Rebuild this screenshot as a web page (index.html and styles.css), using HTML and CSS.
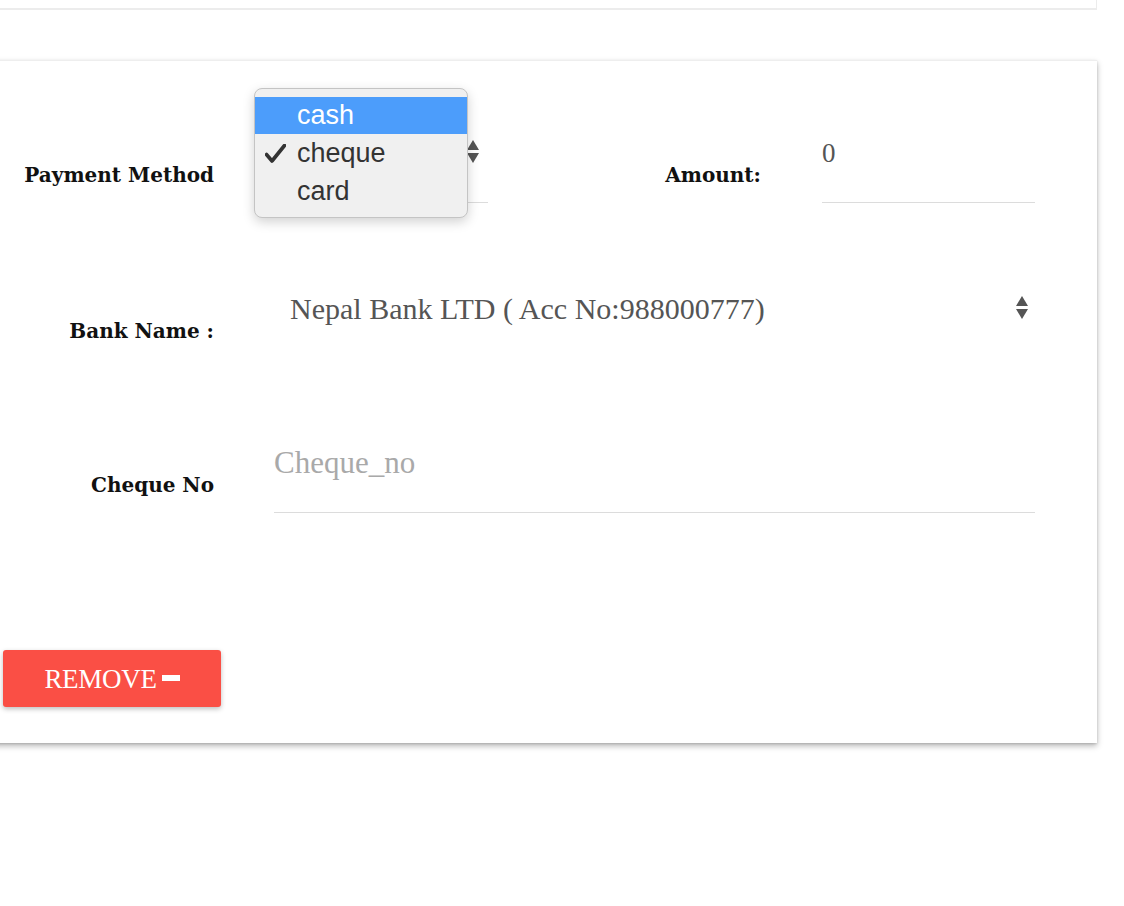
FILE: index.html
```html
<!DOCTYPE html>
<html>
<head>
<meta charset="utf-8">
<link rel="stylesheet" href="styles.css">
</head>
<body>
<div class="top-card"></div>
<div class="card">
  <div class="row row-1">
    <div class="label">Payment Method</div>
    <div class="select pay-select">
      <span class="arrows"><i class="up"></i><i class="down"></i></span>
    </div>
    <div class="label amount-label">Amount:</div>
    <div class="input amount-input">0</div>
  </div>
  <div class="row row-2">
    <div class="label">Bank Name :</div>
    <div class="select bank-select">
      <span class="select-text">Nepal Bank LTD ( Acc No:988000777)</span>
      <span class="arrows"><i class="up"></i><i class="down"></i></span>
    </div>
  </div>
  <div class="row row-3">
    <div class="label">Cheque No</div>
    <div class="input cheque-input"><span class="placeholder">Cheque_no</span></div>
  </div>
  <div class="btn-row">
    <button class="remove-btn">REMOVE<span class="minus"></span></button>
  </div>
  <div class="popup">
    <div class="opt selected">cash</div>
    <div class="opt"><svg class="check" width="21" height="19" viewBox="0 0 21 19"><path d="M1.5 10.5 L7 17 L19.5 1.5" fill="none" stroke="#333" stroke-width="3.6" stroke-linecap="round" stroke-linejoin="round"/></svg>cheque</div>
    <div class="opt">card</div>
  </div>
</div>
</body>
</html>
```

FILE: styles.css
```css
html, body {
  margin: 0;
  padding: 0;
  background: #fff;
  overflow: hidden;
}
body {
  width: 1124px;
  height: 906px;
  font-family: "DejaVu Serif", "Liberation Serif", serif;
}
.top-card {
  width: 1096px;
  height: 8px;
  background: #fff;
  border-bottom: 2px solid #ececec;
  border-right: 1px solid #ececec;
}
.card {
  position: relative;
  margin-top: 50px;
  margin-left: -10px;
  width: 1107px;
  height: 683px;
  box-sizing: border-box;
  padding: 59px 0 0 10px;
  background: #fff;
  border-top: 1px solid #eee;
  box-shadow: 0 3px 6px rgba(0, 0, 0, 0.28), 0 1px 2px rgba(0, 0, 0, 0.12);
}
.row {
  display: flex;
  align-items: flex-start;
}
.row-1 { height: 83px; }
.row-2 { height: 60px; margin-top: 77px; }
.row-3 { height: 83px; margin-top: 90px; }
.label {
  width: 214px;
  flex: none;
  text-align: right;
  font-weight: bold;
  font-size: 20px;
  line-height: 24px;
  color: #111;
  padding-top: 43px;
  white-space: nowrap;
}
.row-2 .label { padding-top: 39px; }
.amount-label { width: 273px; }
.select {
  position: relative;
  box-sizing: border-box;
  display: flex;
  align-items: center;
  flex: none;
}
.pay-select {
  margin-left: 40px;
  width: 234px;
  height: 83px;
  border-bottom: 1px solid #dcdcdc;
}
.pay-select .arrows { position: absolute; left: 213px; top: 20px; }
.bank-select {
  margin-left: 60px;
  width: 761px;
  height: 58px;
  padding-left: 16px;
  font-family: "Liberation Serif", serif;
  font-size: 30px;
  color: #555;
}
.bank-select .arrows { position: absolute; right: 7px; top: 16px; }
.arrows {
  display: flex;
  flex-direction: column;
  gap: 3px;
}
.arrows i {
  display: block;
  width: 0;
  height: 0;
  border-left: 6.5px solid transparent;
  border-right: 6.5px solid transparent;
}
.arrows .up { border-bottom: 10px solid #555; }
.arrows .down { border-top: 10px solid #555; }
.input {
  box-sizing: border-box;
  flex: none;
  height: 83px;
  border-bottom: 1px solid #dcdcdc;
  line-height: 66px;
  font-family: "Liberation Serif", serif;
  font-size: 27px;
  color: #555;
}
.amount-input {
  margin-left: 61px;
  width: 213px;
}
.cheque-input {
  margin-left: 60px;
  width: 761px;
}
.placeholder {
  color: #a9a9a9;
  font-size: 31px;
}
.btn-row {
  margin-top: 137px;
  display: flex;
}
.remove-btn {
  margin-left: 3px;
  width: 218px;
  height: 57px;
  border: none;
  border-radius: 3px;
  background: #fa4f45;
  color: #fff;
  font-family: "Liberation Serif", serif;
  font-size: 27px;
  letter-spacing: -0.3px;
  display: flex;
  align-items: center;
  justify-content: center;
  padding: 2px 0 0 0;
  box-shadow: 0 2px 5px rgba(0, 0, 0, 0.26);
}
.minus {
  display: inline-block;
  width: 18px;
  height: 6px;
  background: #fff;
  margin-left: 5px;
  margin-bottom: 4px;
}
.popup {
  position: absolute;
  left: 264px;
  top: 27px;
  width: 214px;
  height: 130px;
  box-sizing: border-box;
  padding-top: 8px;
  background: #f0f0f0;
  border: 1px solid #c4c4c4;
  border-radius: 8px;
  box-shadow: 0 4px 12px rgba(0, 0, 0, 0.18);
  font-family: "Liberation Sans", Arial, sans-serif;
  font-size: 27px;
  color: #333;
}
.opt {
  position: relative;
  height: 38px;
  line-height: 36px;
  padding-left: 42px;
}
.opt.selected {
  height: 37px;
  background: #4c9dfb;
  color: #fff;
  margin-bottom: 1px;
}
.check {
  position: absolute;
  left: 10px;
  top: 9px;
}
```
